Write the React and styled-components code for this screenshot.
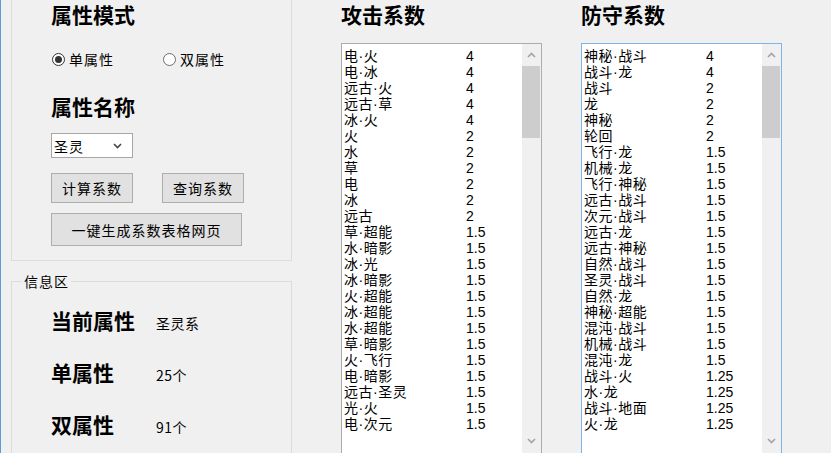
import React from "react";
import styled, { createGlobalStyle } from "styled-components";

const attack = [
  ["电·火", "4"],
  ["电·冰", "4"],
  ["远古·火", "4"],
  ["远古·草", "4"],
  ["冰·火", "4"],
  ["火", "2"],
  ["水", "2"],
  ["草", "2"],
  ["电", "2"],
  ["冰", "2"],
  ["远古", "2"],
  ["草·超能", "1.5"],
  ["水·暗影", "1.5"],
  ["冰·光", "1.5"],
  ["冰·暗影", "1.5"],
  ["火·超能", "1.5"],
  ["冰·超能", "1.5"],
  ["水·超能", "1.5"],
  ["草·暗影", "1.5"],
  ["火·飞行", "1.5"],
  ["电·暗影", "1.5"],
  ["远古·圣灵", "1.5"],
  ["光·火", "1.5"],
  ["电·次元", "1.5"]
];

const defense = [
  ["神秘·战斗", "4"],
  ["战斗·龙", "4"],
  ["战斗", "2"],
  ["龙", "2"],
  ["神秘", "2"],
  ["轮回", "2"],
  ["飞行·龙", "1.5"],
  ["机械·龙", "1.5"],
  ["飞行·神秘", "1.5"],
  ["远古·战斗", "1.5"],
  ["次元·战斗", "1.5"],
  ["远古·龙", "1.5"],
  ["远古·神秘", "1.5"],
  ["自然·战斗", "1.5"],
  ["圣灵·战斗", "1.5"],
  ["自然·龙", "1.5"],
  ["神秘·超能", "1.5"],
  ["混沌·战斗", "1.5"],
  ["机械·战斗", "1.5"],
  ["混沌·龙", "1.5"],
  ["战斗·火", "1.25"],
  ["水·龙", "1.25"],
  ["战斗·地面", "1.25"],
  ["火·龙", "1.25"]
];

const Chevron = ({ up, color = "#a3a3a3" }) => (
  <svg width="9" height="6" viewBox="0 0 9 6">
    <polyline
      points={up ? "1,5 4.5,1.5 8,5" : "1,1 4.5,4.5 8,1"}
      fill="none"
      stroke={color}
      strokeWidth="1.6"
    />
  </svg>
);

const List = ({ rows, focused }) => (
  <ListBox focused={focused}>
    <ListRows>
      {rows.map(([name, value]) => (
        <Row key={name}>
          <Name>{name}</Name>
          <Value>{value}</Value>
        </Row>
      ))}
    </ListRows>
    <ScrollBar>
      <ArrowBox>
        <Chevron up />
      </ArrowBox>
      <Thumb />
      <Track />
      <ArrowBox bottom>
        <Chevron />
      </ArrowBox>
    </ScrollBar>
  </ListBox>
);

export default function App() {
  return (
    <Window>
      <GlobalStyle />
      <LeftColumn>
        <TopGroup>
          <Heading>属性模式</Heading>
          <RadioRow>
            <RadioItem>
              <RadioCircle checked />
              单属性
            </RadioItem>
            <RadioItem>
              <RadioCircle />
              双属性
            </RadioItem>
          </RadioRow>
          <Heading spaced>属性名称</Heading>
          <Select>
            圣灵
            <Chevron color="#444" />
          </Select>
          <ButtonRow>
            <Button>计算系数</Button>
            <Button>查询系数</Button>
          </ButtonRow>
          <Button wide>一键生成系数表格网页</Button>
        </TopGroup>
        <InfoGroup>
          <Legend>信息区</Legend>
          <InfoRow>
            <Heading>当前属性</Heading>
            <InfoValue>圣灵系</InfoValue>
          </InfoRow>
          <InfoRow>
            <Heading>单属性</Heading>
            <InfoValue>25个</InfoValue>
          </InfoRow>
          <InfoRow>
            <Heading>双属性</Heading>
            <InfoValue>91个</InfoValue>
          </InfoRow>
        </InfoGroup>
      </LeftColumn>
      <ListColumn gap="49px">
        <Heading>攻击系数</Heading>
        <List rows={attack} />
      </ListColumn>
      <ListColumn gap="39px">
        <Heading>防守系数</Heading>
        <List rows={defense} focused />
      </ListColumn>
    </Window>
  );
}

const GlobalStyle = createGlobalStyle`
  html, body {
    margin: 0;
    padding: 0;
    background: #f0f0f0;
    overflow: hidden;
  }
  body {
    font-family: "Noto Sans CJK SC", "Liberation Sans", sans-serif;
    color: #000;
  }
`;

const Window = styled.div`
  display: flex;
  align-items: flex-start;
  width: 831px;
  height: 453px;
  box-sizing: border-box;
  overflow: hidden;
  border-left: 1px solid #5b9be0;
  padding-left: 10px;
`;

const LeftColumn = styled.div`
  display: flex;
  flex-direction: column;
  width: 281px;
  flex-shrink: 0;
`;

const TopGroup = styled.div`
  display: flex;
  flex-direction: column;
  align-items: flex-start;
  height: 261px;
  box-sizing: border-box;
  border: 1px solid #dcdcdc;
  border-top: none;
  padding-left: 39px;
`;

const Heading = styled.div`
  font-size: 21px;
  font-weight: 700;
  line-height: 28px;
  white-space: nowrap;
  margin-top: ${p => (p.spaced ? "23px" : "0")};
`;

const RadioRow = styled.div`
  display: flex;
  height: 20px;
  margin-top: 21px;
  padding-left: 1px;
`;

const RadioItem = styled.div`
  display: flex;
  align-items: center;
  gap: 4px;
  width: 111px;
  font-size: 14px;
  letter-spacing: 1px;
`;

const RadioCircle = styled.span`
  display: flex;
  align-items: center;
  justify-content: center;
  width: 13px;
  height: 13px;
  box-sizing: border-box;
  border-radius: 50%;
  border: 1px solid ${p => (p.checked ? "#333" : "#6d6d6d")};
  background: #fff;

  &::after {
    content: "";
    width: 7px;
    height: 7px;
    border-radius: 50%;
    background: ${p => (p.checked ? "#333" : "transparent")};
  }
`;

const Select = styled.div`
  display: flex;
  align-items: center;
  justify-content: space-between;
  width: 82px;
  height: 25px;
  box-sizing: border-box;
  margin-top: 13px;
  padding: 0 10px 0 2px;
  border: 1px solid #a6a6a6;
  background: #fff;
  font-size: 14px;
  letter-spacing: 1px;
`;

const ButtonRow = styled.div`
  display: flex;
  gap: 29px;
  margin-top: 15px;
`;

const Button = styled.button`
  width: ${p => (p.wide ? "191px" : "82px")};
  height: ${p => (p.wide ? "33px" : "30px")};
  margin-top: ${p => (p.wide ? "10px" : "0")};
  padding: 0;
  border: 1px solid #adadad;
  background: #e1e1e1;
  font-family: "Noto Sans CJK SC", sans-serif;
  font-size: 14px;
  letter-spacing: 1px;
  color: #000;
`;

const InfoGroup = styled.fieldset`
  margin: 10px 0 0;
  padding: 3px 0 0 39px;
  height: 200px;
  box-sizing: border-box;
  border: 1px solid #dcdcdc;
  min-width: 0;
`;

const Legend = styled.legend`
  margin-left: -29px;
  padding: 0 2px;
  font-size: 14px;
  line-height: 20px;
  letter-spacing: 1px;
`;

const InfoRow = styled.div`
  display: grid;
  grid-template-columns: 105px auto;
  align-items: baseline;
  height: 52px;
  padding-top: 12px;
  box-sizing: border-box;
`;

const InfoValue = styled.div`
  font-size: 14px;
  letter-spacing: 0.5px;
`;

const ListColumn = styled.div`
  display: flex;
  flex-direction: column;
  margin-left: ${p => p.gap};
  flex-shrink: 0;
`;

const ListBox = styled.div`
  display: flex;
  width: 201px;
  height: 414px;
  margin-top: 15px;
  box-sizing: border-box;
  border: 1px solid ${p => (p.focused ? "#7eb4ea" : "#abadb3")};
  background: #fff;
`;

const ListRows = styled.div`
  flex: 1;
  padding: 4px 0 0 2px;
`;

const Row = styled.div`
  display: flex;
  height: 16px;
  line-height: 16px;
  overflow: hidden;
`;

const Name = styled.span`
  width: 122px;
  font-family: "Liberation Sans", "Noto Sans CJK SC", sans-serif;
  font-size: 14px;
  letter-spacing: 0.5px;
  white-space: nowrap;
`;

const Value = styled.span`
  font-family: "Liberation Sans", sans-serif;
  font-size: 14px;
`;

const ScrollBar = styled.div`
  display: flex;
  flex-direction: column;
  width: 19px;
  background: #f0f0f0;
`;

const ArrowBox = styled.div`
  display: flex;
  align-items: center;
  justify-content: center;
  height: 22px;
  margin-bottom: ${p => (p.bottom ? "4px" : "0")};
`;

const Thumb = styled.div`
  height: 72px;
  margin-right: 1px;
  background: #cdcdcd;
`;

const Track = styled.div`
  flex: 1;
`;
